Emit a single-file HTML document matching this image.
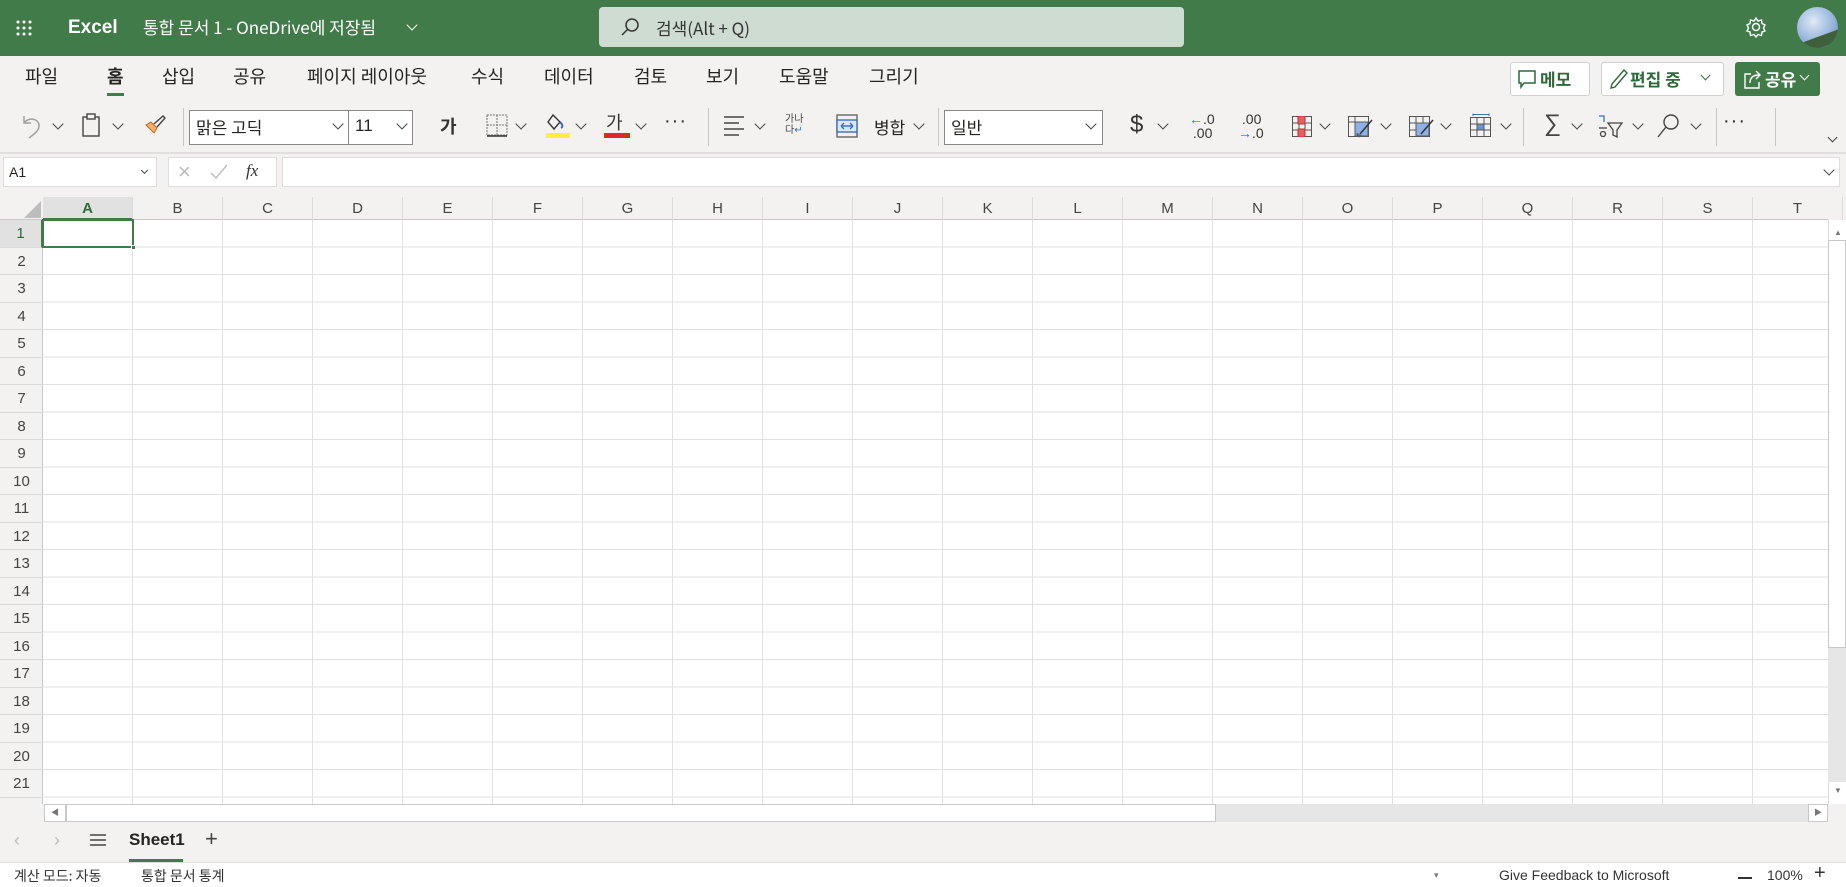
<!DOCTYPE html>
<html><head><meta charset="utf-8">
<style>
*{box-sizing:border-box;margin:0;padding:0}
body{width:1846px;height:887px;overflow:hidden;background:#f3f2f1;font-family:"Liberation Sans","Noto Sans CJK KR",sans-serif;color:#252423;position:relative}
.a{position:absolute}
.k{font-family:"Noto Sans CJK KR","Liberation Sans",sans-serif}
.chev{position:absolute;width:8px;height:8px;border-right:1.4px solid #444;border-bottom:1.4px solid #444;transform:rotate(45deg)}
.sep{position:absolute;width:1px;background:#c8c6c4;top:108px;height:38px}
.tab{position:absolute;top:63px;font-size:18px;font-family:"Noto Sans CJK KR",sans-serif;color:#252423}
.ch{position:absolute;top:197px;height:23px;width:90px;text-align:center;font-size:15px;line-height:23px;color:#444;border-right:1px solid #dadada}
.rh{position:absolute;left:0;width:43px;height:27.5px;text-align:center;font-size:15px;line-height:27px;color:#444;border-bottom:1px solid #dadada}
</style></head><body>
<!-- header -->
<div class="a" style="left:0;top:0;width:1846px;height:56px;background:#417b49"></div>
<svg class="a" style="left:16px;top:20px" width="16" height="16" fill="#fff"><circle cx="2" cy="2" r="1.5"/><circle cx="8" cy="2" r="1.5"/><circle cx="14" cy="2" r="1.5"/><circle cx="2" cy="8" r="1.5"/><circle cx="8" cy="8" r="1.5"/><circle cx="14" cy="8" r="1.5"/><circle cx="2" cy="14" r="1.5"/><circle cx="8" cy="14" r="1.5"/><circle cx="14" cy="14" r="1.5"/></svg>
<div class="a" style="left:68px;top:17px;color:#fff;font-size:19px;font-weight:bold">Excel</div>
<div class="a k" style="left:143px;top:14px;color:#fff;font-size:17px">통합 문서 1 - OneDrive에 저장됨</div>
<div class="chev" style="left:408px;top:21px;border-color:#fff"></div>
<div class="a" style="left:599px;top:7px;width:585px;height:40px;background:#cfdcd1;border-radius:4px"></div>
<svg class="a" style="left:620px;top:17px" width="20" height="20" fill="none" stroke="#333" stroke-width="1.5"><circle cx="12" cy="8" r="6"/><path d="M8 12 L2 18"/></svg>
<div class="a k" style="left:656px;top:15px;font-size:17px;color:#333">검색(Alt + Q)</div>
<svg class="a" style="left:1745px;top:16px" width="22" height="22" fill="none" stroke="#fff" stroke-width="1.4"><circle cx="11" cy="11" r="3.5"/><path d="M11 2 L13 5 L16.5 4 L17 7.5 L20 9 L18.5 12 L20 15 L17 16 L16.5 19.5 L13 18.5 L11 21 L9 18.5 L5.5 19.5 L5 16 L2 15 L3.5 12 L2 9 L5 7.5 L5.5 4 L9 5 Z"/></svg>
<div class="a" style="left:1797px;top:7px;width:41px;height:41px;border-radius:50%;background:radial-gradient(circle at 40% 35%,#dfe9f5,#8fb0d8 60%,#4e6f9a);overflow:hidden"><div style="position:absolute;left:0;top:30px;width:41px;height:12px;background:#3f5e3a;transform:skewY(-20deg)"></div></div>
<!-- tabs -->
<div class="tab" style="left:25px">파일</div>
<div class="tab" style="left:107px;font-weight:bold">홈</div>
<div class="a" style="left:107px;top:93px;width:17px;height:3px;background:#417b49"></div>
<div class="tab" style="left:162px">삽입</div>
<div class="tab" style="left:233px">공유</div>
<div class="tab" style="left:307px">페이지 레이아웃</div>
<div class="tab" style="left:471px">수식</div>
<div class="tab" style="left:544px">데이터</div>
<div class="tab" style="left:634px">검토</div>
<div class="tab" style="left:706px">보기</div>
<div class="tab" style="left:779px">도움말</div>
<div class="tab" style="left:869px">그리기</div>
<div class="a" style="left:1510px;top:62px;width:80px;height:34px;background:#fff;border:1px solid #d2d0ce;border-radius:3px"></div>
<svg class="a" style="left:1518px;top:70px" width="18" height="20" fill="none" stroke="#2f6a3a" stroke-width="1.5"><path d="M1 1 H17 V13 H6 L3 17 V13 H1 Z"/></svg>
<div class="a k" style="left:1540px;top:66px;font-size:17px;font-weight:bold;color:#2f6a3a">메모</div>
<div class="a" style="left:1601px;top:62px;width:123px;height:34px;background:#fff;border:1px solid #d2d0ce;border-radius:3px"></div>
<svg class="a" style="left:1609px;top:68px" width="20" height="22" fill="none" stroke="#2f6a3a" stroke-width="1.4"><path d="M15 2 L18 5 L6 19 L2 20 L3 16 Z"/></svg>
<div class="a k" style="left:1630px;top:66px;font-size:17px;font-weight:bold;color:#2f6a3a">편집 중</div>
<div class="chev" style="left:1702px;top:72px;border-color:#2f6a3a;width:7px;height:7px"></div>
<div class="a" style="left:1735px;top:62px;width:85px;height:34px;background:#417b49;border-radius:3px"></div>
<svg class="a" style="left:1743px;top:68px" width="20" height="22" fill="none" stroke="#fff" stroke-width="1.4"><path d="M8 6 H2 V20 H16 V14"/><path d="M7 15 C7 9 11 7 16 7 M13 3 L17 7 L13 11"/></svg>
<div class="a k" style="left:1765px;top:66px;font-size:17px;font-weight:bold;color:#fff">공유</div>
<div class="chev" style="left:1801px;top:72px;border-color:#fff;width:7px;height:7px"></div>
<!-- toolbar -->
<svg class="a" style="left:20px;top:114px" width="24" height="26" fill="none" stroke="#a19f9d" stroke-width="1.5"><path d="M4 2 V9 H11 M4 9 C8 3 19 4 19 12 C19 17 14 20 9 24"/></svg>
<div class="chev" style="left:54px;top:120px"></div>
<svg class="a" style="left:82px;top:113px" width="20" height="25" fill="none" stroke="#444" stroke-width="1.4"><rect x="1" y="4" width="16" height="19"/><rect x="5" y="1" width="8" height="5" fill="#f3f2f1"/></svg>
<div class="chev" style="left:114px;top:120px"></div>
<svg class="a" style="left:143px;top:113px" width="24" height="24"><path d="M3 12 L11 20 L14 15 L8 9 Z" fill="#f0b070" stroke="#c86a1a"/><path d="M11 11 L20 3 L22 5 L14 14" fill="none" stroke="#444" stroke-width="1.4"/></svg>
<div class="sep" style="left:183px"></div>
<div class="a" style="left:189px;top:110px;width:160px;height:35px;background:#fff;border:1px solid #8a8886"></div>
<div class="a k" style="left:196px;top:114px;font-size:17px">맑은 고딕</div>
<div class="chev" style="left:334px;top:120px"></div>
<div class="a" style="left:348px;top:110px;width:65px;height:35px;background:#fff;border:1px solid #8a8886"></div>
<div class="a" style="left:355px;top:116px;font-size:17px">11</div>
<div class="chev" style="left:398px;top:120px"></div>
<div class="a k" style="left:440px;top:113px;font-size:18px;font-weight:bold;color:#333">가</div>
<svg class="a" style="left:486px;top:114px" width="22" height="24" fill="none" stroke="#777" stroke-width="1" stroke-dasharray="2 1"><rect x="1" y="1" width="20" height="20"/><path d="M11 1 V21 M1 11 H21"/><path d="M1 22 H21" stroke="#333" stroke-dasharray="none" stroke-width="1.5"/></svg>
<div class="chev" style="left:517px;top:120px"></div>
<svg class="a" style="left:545px;top:112px" width="26" height="28"><path d="M8 3 L3 10 L9 17 L15 10 Z" fill="none" stroke="#333" stroke-width="1.4"/><path d="M15 10 C18 13 18 15 16 16" stroke="#3b6fc0" fill="none" stroke-width="2"/><rect x="1" y="21" width="24" height="5" fill="#ffef3f"/></svg>
<div class="chev" style="left:577px;top:120px"></div>
<div class="a k" style="left:606px;top:109px;font-size:18px;color:#333">가</div>
<div class="a" style="left:604px;top:133px;width:26px;height:5px;background:#d92d20"></div>
<div class="chev" style="left:637px;top:120px"></div>
<div class="a" style="left:664px;top:110px;font-size:20px;letter-spacing:1px;color:#333">···</div>
<div class="sep" style="left:708px"></div>
<svg class="a" style="left:723px;top:114px" width="22" height="24" stroke="#444" stroke-width="1.4"><path d="M1 3H21M1 9H16M1 15H21M1 21H16"/></svg>
<div class="chev" style="left:756px;top:120px"></div>
<div class="a k" style="left:785px;top:112px;font-size:10px;line-height:11px;color:#444">가나<br>다<span style="color:#3b6fc0">↵</span></div>
<svg class="a" style="left:836px;top:114px" width="22" height="24" fill="none" stroke="#3b6fc0" stroke-width="1.4"><rect x="1" y="1" width="20" height="22" stroke="#666"/><rect x="1" y="6" width="20" height="12" fill="#dce8f7"/><path d="M5 12 H17 M5 12 L8 9 M5 12 L8 15 M17 12 L14 9 M17 12 L14 15"/></svg>
<div class="a k" style="left:874px;top:114px;font-size:17px">병합</div>
<div class="chev" style="left:915px;top:120px"></div>
<div class="sep" style="left:938px"></div>
<div class="a" style="left:944px;top:110px;width:159px;height:35px;background:#fff;border:1px solid #8a8886"></div>
<div class="a k" style="left:951px;top:114px;font-size:17px">일반</div>
<div class="chev" style="left:1087px;top:120px"></div>
<div class="a" style="left:1130px;top:111px;font-size:24px;color:#333">$</div>
<div class="chev" style="left:1159px;top:120px"></div>
<div class="a" style="left:1189px;top:112px;font-size:14px;line-height:14px;color:#333"><span style="color:#3b6fc0">←</span>.0<br>&nbsp;.00</div>
<div class="a" style="left:1238px;top:112px;font-size:14px;line-height:14px;color:#333">&nbsp;.00<br><span style="color:#3b6fc0">→</span>.0</div>
<svg class="a" style="left:1292px;top:116px" width="20" height="21" fill="none" stroke="#555"><rect x=".5" y=".5" width="19" height="20"/><path d="M7 .5V20.5M13 .5V20.5M.5 7H19.5M.5 14H19.5"/><rect x="6" y="0" width="7" height="8" fill="#e26262" stroke="#c03030"/><rect x="6" y="13" width="7" height="8" fill="#e26262" stroke="#c03030"/></svg>
<div class="chev" style="left:1321px;top:120px"></div>
<svg class="a" style="left:1348px;top:116px" width="26" height="24" fill="none" stroke="#555"><rect x=".5" y=".5" width="20" height="20"/><path d="M.5 6H20.5M7 .5V20.5"/><rect x="7" y="6" width="13" height="14" fill="#8fb2e6"/><path d="M24 4 L12 18" stroke="#333" stroke-width="1.5"/><path d="M9 17 C9 21 13 22 13 19" fill="#3b6fc0"/></svg>
<div class="chev" style="left:1382px;top:120px"></div>
<svg class="a" style="left:1409px;top:116px" width="26" height="24" fill="none" stroke="#555"><rect x=".5" y=".5" width="20" height="20"/><path d="M7 .5V20.5M14 .5V20.5M.5 7H20.5M.5 14H20.5"/><rect x="7" y="7" width="13" height="13" fill="#8fb2e6"/><path d="M24 4 L12 18" stroke="#333" stroke-width="1.5"/></svg>
<div class="chev" style="left:1442px;top:120px"></div>
<svg class="a" style="left:1470px;top:113px" width="22" height="25" fill="none" stroke="#555"><path d="M3 1.5H19M3 .5V3M19 .5V3" stroke="#3b6fc0"/><rect x=".5" y="4.5" width="20" height="19"/><path d="M7 4.5V23.5M14 4.5V23.5M.5 11H20.5M.5 17H20.5"/><rect x="7" y="11" width="7" height="6" fill="#6b94d6"/></svg>
<div class="chev" style="left:1502px;top:120px"></div>
<div class="sep" style="left:1523px"></div>
<div class="a" style="left:1544px;top:110px;font-size:24px;color:#444">∑</div>
<div class="chev" style="left:1573px;top:120px"></div>
<svg class="a" style="left:1597px;top:114px" width="28" height="26" fill="none" stroke="#444" stroke-width="1.3"><path d="M2 2H7V8" stroke="#3b6fc0"/><circle cx="6" cy="20" r="2.5"/><path d="M2 14H10"/><path d="M11 9H25L20 16V23L16 21V16Z"/></svg>
<div class="chev" style="left:1634px;top:120px"></div>
<svg class="a" style="left:1656px;top:113px" width="24" height="26" fill="none" stroke="#444" stroke-width="1.4"><circle cx="15" cy="9" r="7"/><path d="M10 14L2 24"/></svg>
<div class="chev" style="left:1692px;top:120px"></div>
<div class="sep" style="left:1716px"></div>
<div class="a" style="left:1723px;top:110px;font-size:20px;letter-spacing:1px;color:#333">···</div>
<div class="sep" style="left:1775px"></div>
<div class="chev" style="left:1829px;top:134px;width:7px;height:7px"></div>
<div class="a" style="left:0;top:152px;width:1846px;height:2px;background:#e1dfdd"></div>
<!-- formula bar -->
<div class="a" style="left:3px;top:157px;width:154px;height:30px;background:#fff;border:1px solid #e1dfdd"></div>
<div class="a" style="left:9px;top:164px;font-size:14px">A1</div>
<div class="chev" style="left:142px;top:168px;width:5px;height:5px"></div>
<div class="a" style="left:168px;top:157px;width:109px;height:30px;background:#fff;border:1px solid #e1dfdd"></div>
<div class="a" style="left:178px;top:159px;font-size:22px;color:#bbb;font-weight:300">×</div>
<svg class="a" style="left:210px;top:164px" width="18" height="16" fill="none" stroke="#bbb" stroke-width="1.4"><path d="M1 9L6 14L17 1"/></svg>
<div class="a" style="left:246px;top:161px;font-size:17px;font-style:italic;font-family:'Liberation Serif',serif;color:#333">fx</div>
<div class="a" style="left:282px;top:157px;width:1558px;height:30px;background:#fff;border:1px solid #e1dfdd"></div>
<div class="chev" style="left:1825px;top:166px"></div>
<!-- grid -->
<div class="a" style="left:0;top:197px;width:1828px;height:607px;background:#fff"></div>
<div class="a" style="left:0;top:197px;width:1828px;height:23px;background:#f3f2f1;border-bottom:1px solid #c8c8c8"></div>
<div class="a" style="left:0;top:220px;width:43px;height:584px;background:#f3f2f1;border-right:1px solid #c8c8c8"></div>
<svg class="a" style="left:22px;top:199px" width="20" height="20"><path d="M19 2V19H2Z" fill="#bdbdbd"/></svg>
<div class="a" style="left:43px;top:220px;width:1785px;height:584px;background-image:repeating-linear-gradient(to right,transparent 0,transparent 89px,#e1e1e1 89px,#e1e1e1 90px),repeating-linear-gradient(to bottom,transparent 0,transparent 26.5px,#e1e1e1 26.5px,#e1e1e1 27.5px)"></div>
<div class="a" style="left:43px;top:197px;width:90px;height:23px;background:#e1e1e1;border-bottom:2px solid #417b49"></div>
<div class="ch" style="left:43px;color:#2f6a3a;font-weight:bold">A</div><div class="ch" style="left:133px">B</div><div class="ch" style="left:223px">C</div><div class="ch" style="left:313px">D</div><div class="ch" style="left:403px">E</div><div class="ch" style="left:493px">F</div><div class="ch" style="left:583px">G</div><div class="ch" style="left:673px">H</div><div class="ch" style="left:763px">I</div><div class="ch" style="left:853px">J</div><div class="ch" style="left:943px">K</div><div class="ch" style="left:1033px">L</div><div class="ch" style="left:1123px">M</div><div class="ch" style="left:1213px">N</div><div class="ch" style="left:1303px">O</div><div class="ch" style="left:1393px">P</div><div class="ch" style="left:1483px">Q</div><div class="ch" style="left:1573px">R</div><div class="ch" style="left:1663px">S</div><div class="ch" style="left:1753px">T</div>
<div class="rh" style="top:220px;background:#e1e1e1;color:#2f6a3a;border-right:2px solid #417b49">1</div>
<div class="rh" style="top:247.5px">2</div><div class="rh" style="top:275px">3</div><div class="rh" style="top:302.5px">4</div><div class="rh" style="top:330px">5</div><div class="rh" style="top:357.5px">6</div><div class="rh" style="top:385px">7</div><div class="rh" style="top:412.5px">8</div><div class="rh" style="top:440px">9</div><div class="rh" style="top:467.5px">10</div><div class="rh" style="top:495px">11</div><div class="rh" style="top:522.5px">12</div><div class="rh" style="top:550px">13</div><div class="rh" style="top:577.5px">14</div><div class="rh" style="top:605px">15</div><div class="rh" style="top:632.5px">16</div><div class="rh" style="top:660px">17</div><div class="rh" style="top:687.5px">18</div><div class="rh" style="top:715px">19</div><div class="rh" style="top:742.5px">20</div><div class="rh" style="top:770px">21</div>
<div class="a" style="left:42px;top:219px;width:92px;height:29px;border:2px solid #417b49"></div>
<div class="a" style="left:131px;top:245px;width:5px;height:5px;background:#417b49;border:1px solid #fff"></div>
<!-- vertical scrollbar -->
<div class="a" style="left:1828px;top:220px;width:18px;height:584px;background:#fff;border-left:1px solid #dadada"></div>
<div class="a" style="left:1828px;top:240px;width:18px;height:408px;background:#fff;border:1px solid #c8c8c8"></div>
<div class="a" style="left:1828px;top:648px;width:18px;height:134px;background:#e6e6e6"></div>
<div class="a" style="left:1834px;top:228px;font-size:8px;color:#777">▲</div>
<div class="a" style="left:1834px;top:786px;font-size:8px;color:#777">▼</div>
<!-- horizontal scrollbar -->
<div class="a" style="left:44px;top:804px;width:1784px;height:18px;background:#e6e6e6"></div>
<div class="a" style="left:44px;top:804px;width:22px;height:18px;background:#fff;border:1px solid #c8c8c8;font-size:8px;color:#777;text-align:center;line-height:16px">◀</div>
<div class="a" style="left:66px;top:804px;width:1150px;height:18px;background:#fff;border:1px solid #c8c8c8"></div>
<div class="a" style="left:1808px;top:804px;width:20px;height:18px;background:#fff;border:1px solid #c8c8c8;font-size:8px;color:#777;text-align:center;line-height:16px">▶</div>
<!-- sheet tabs -->
<div class="a" style="left:14px;top:830px;font-size:18px;color:#bbb">‹</div>
<div class="a" style="left:54px;top:830px;font-size:18px;color:#bbb">›</div>
<svg class="a" style="left:90px;top:833px" width="16" height="14" stroke="#444" stroke-width="1.4"><path d="M0 2H16M0 7H16M0 12H16"/></svg>
<div class="a" style="left:129px;top:830px;font-size:17px;font-weight:bold;color:#252423">Sheet1</div>
<div class="a" style="left:129px;top:859px;width:54px;height:3px;background:#417b49"></div>
<div class="a" style="left:205px;top:826px;font-size:22px;color:#444">+</div>
<!-- status bar -->
<div class="a" style="left:0;top:862px;width:1846px;height:25px;background:#fff;border-top:1px solid #e1dfdd"></div>
<div class="a k" style="left:14px;top:866px;font-size:14px;color:#333">계산 모드: 자동</div>
<div class="a k" style="left:141px;top:866px;font-size:14px;color:#333">통합 문서 통계</div>
<div class="a" style="left:1434px;top:870px;font-size:9px;color:#777">▾</div>
<div class="a" style="left:1499px;top:867px;font-size:14px;color:#333">Give Feedback to Microsoft</div>
<div class="a" style="left:1738px;top:877px;width:14px;height:1.5px;background:#333"></div>
<div class="a" style="left:1767px;top:867px;font-size:14px;color:#333">100%</div>
<div class="a" style="left:1814px;top:862px;font-size:20px;color:#333">+</div>
</body></html>
